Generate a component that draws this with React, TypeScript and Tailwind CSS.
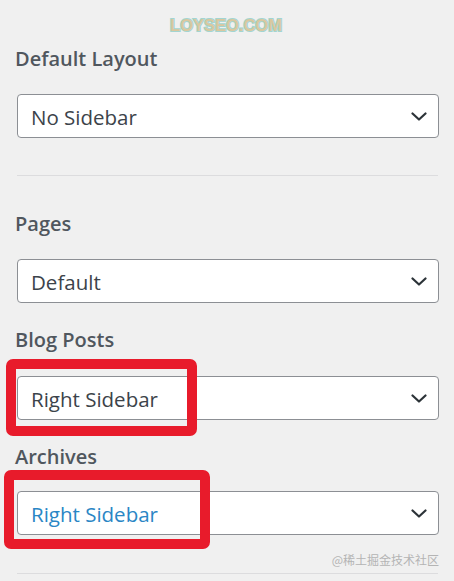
import React from "react";

const Chevron = () => (
  <svg width="16" height="9" viewBox="0 0 16 9" fill="none" className="shrink-0">
    <path d="M1.5 1.5 L8 7.5 L14.5 1.5" stroke="#2c3338" strokeWidth="2.2" strokeLinecap="round" strokeLinejoin="round" />
  </svg>
);

const Select = ({ value, active }: { value: string; active?: boolean }) => (
  <div className="flex items-center justify-between h-[44px] w-[422px] pl-[13px] pr-[11px] bg-white border border-[#8c8f94] rounded-[4px]">
    <span className={`pt-[3px] text-[20.5px] leading-none ${active ? "text-[#2a86c5]" : "text-[#3c434a]"}`}>{value}</span>
    <Chevron />
  </div>
);

const Label = ({ children }: { children: React.ReactNode }) => (
  <h3 className="text-[20px] leading-[28px] font-semibold text-[#50575e]">{children}</h3>
);

export default function App() {
  return (
    <div className="w-[454px] h-[581px] overflow-hidden bg-[#f0f0f0] pl-[17px] pr-[15px] font-['Open_Sans','Noto_Sans',sans-serif]">
      {/* watermark */}
      <div className="h-[45px] flex justify-center pt-[15px]">
        <span className="ml-[-4px] text-[16.5px] leading-[20px] font-black text-[#d9c8a0] [-webkit-text-stroke:2px_#a2d5d1] [paint-order:stroke_fill] font-['Liberation_Sans',sans-serif]">
          LOYSEO.COM
        </span>
      </div>

      <div className="ml-[-2px]">
        <Label>Default Layout</Label>
      </div>
      <div className="mt-[21px]">
        <Select value="No Sidebar" />
      </div>

      <div className="mt-[37px] h-px w-[421px] bg-[#dcdcde]" />

      <div className="mt-[34px] ml-[-2px]">
        <Label>Pages</Label>
      </div>
      <div className="mt-[21px]">
        <Select value="Default" />
      </div>

      <div className="mt-[23px] ml-[-2px]">
        <Label>Blog Posts</Label>
      </div>
      <div className="mt-[22px] relative">
        <Select value="Right Sidebar" />
        <div className="absolute left-[-11px] top-[-17px] w-[191px] h-[77px] border-[10px] border-[#e81b2b] rounded-[7px]" />
      </div>

      <div className="mt-[23px] ml-[-2px]">
        <Label>Archives</Label>
      </div>
      <div className="mt-[20px] relative">
        <Select value="Right Sidebar" active />
        <div className="absolute left-[-13px] top-[-21px] w-[206px] h-[79px] border-[10px] border-[#e81b2b] rounded-[7px]" />
      </div>

      <div className="mt-[18px] w-[422px] flex justify-end">
        <span className="text-[12px] leading-[14px] text-[#b4b4b4] font-['Noto_Sans_CJK_SC',sans-serif]">@稀土掘金技术社区</span>
      </div>
      <div className="mt-[6px] h-px w-[421px] bg-[#dcdcde]" />
    </div>
  );
}
